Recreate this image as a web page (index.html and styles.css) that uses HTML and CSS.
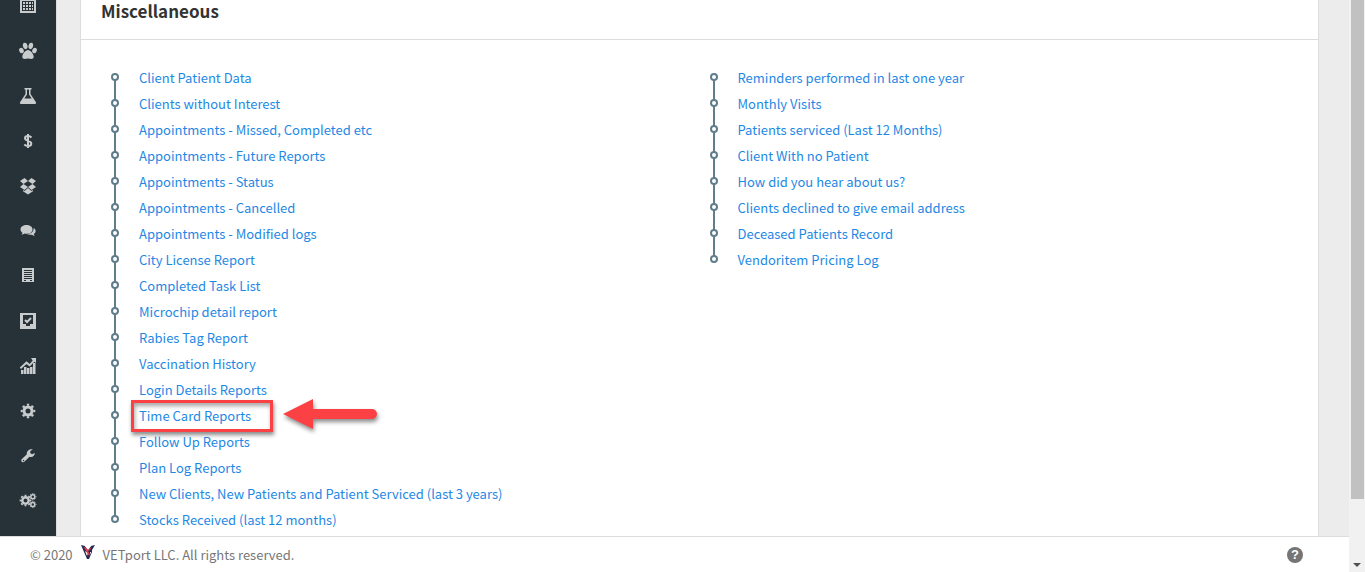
FILE: index.html
```
<!DOCTYPE html>
<html lang="en">
<head>
    <meta charset="utf-8">
    <title>VETport Reports</title>
    <link rel="stylesheet" href="styles.css">
</head>
<body>

    <div class="app">
        <div class="main">
            <nav class="sidebar">
                <a href="#" aria-label="Calendar"><svg viewBox="0 0 18 18"><path fill-rule="evenodd" d="M1 0h3v1h2V0h6v1h2V0h3v16H1zM3 4v10h12V4z"/><path d="M4 5h2v2H4zm3 0h2v2H7zm3 0h2v2h-2zm3 0h1v2h-1zM4 8h2v2H4zm3 0h2v2H7zm3 0h2v2h-2zm3 0h1v2h-1zM4 11h2v2H4zm3 0h2v2H7zm3 0h2v2h-2zm3 0h1v2h-1z"/></svg></a>
                <a href="#" aria-label="Patients"><svg viewBox="0 0 18 18"><ellipse cx="6.200" cy="4" rx="2.300" ry="3.200" transform="rotate(-10 6 4)"/><ellipse cx="11.800" cy="4" rx="2.300" ry="3.200" transform="rotate(10 12 4)"/><ellipse cx="2.700" cy="8.500" rx="2.200" ry="2.800" transform="rotate(-25 2.500 9)"/><ellipse cx="15.300" cy="8.500" rx="2.200" ry="2.800" transform="rotate(25 15.500 9)"/><path d="M9 8c2.500 0 5.700 4 5.700 6.700 0 2.800-2.700 2.300-5.700 1.800-3 .5-5.700 1-5.700-1.800C3.300 12 6.500 8 9 8z"/></svg></a>
                <a href="#" aria-label="Laboratory"><svg viewBox="0 0 18 18"><path fill-rule="evenodd" d="M5.500 1h7v1.500h-1V7l5.300 8c.8 1.300.2 2-1 2H2.200c-1.200 0-1.800-.7-1-2l5.300-8V2.500h-1zM8 2.500v5L5.300 11.500h7.400L10 7.500v-5z"/></svg></a>
                <a href="#" aria-label="Billing"><svg viewBox="0 0 18 18"><path class="line" d="M12.500 5.500C11.500 4.500 10.300 4 9 4 7.200 4 6 5 6 6.300c0 3.200 6.300 1.900 6.300 5.200 0 1.500-1.300 2.500-3.300 2.500-1.500 0-2.700-.5-3.700-1.500M9 2v14"/></svg></a>
                <a href="#" aria-label="Inventory"><svg viewBox="0 0 18 18"><path d="M5.500 1L9 4 4.500 7 1 4zM12.500 1L17 4l-3.500 3L9 4zM4.500 7L9 10l-3.500 3L1 10zM13.500 7l3.500 3-4.500 3L9 10zM9 11l3.500 3 1.500-1v1.200L9 17.500l-5-3.300V13l1.500 1z"/></svg></a>
                <a href="#" aria-label="Messages"><svg viewBox="0 0 18 18"><path d="M7.500 3c3.300 0 6 1.800 6 4.400s-2.700 4.400-6 4.400c-.7 0-1.300-.1-1.900-.2-1 .8-2 1.100-3.200 1.200.7-.7 1-1.300 1.100-2C2.300 9.900 1.500 8.700 1.500 7.400 1.500 4.800 4.200 3 7.500 3z"/><path d="M14.600 6c1.200.7 2 1.700 2 3 0 1.200-.7 2.300-1.900 3 .2.800.5 1.300 1.100 1.900-1.200-.1-2.200-.5-3-1.200-2 .3-3.800 0-5-.7 4.200 0 7.200-2.300 6.800-6z"/></svg></a>
                <a href="#" aria-label="Facilities"><svg viewBox="0 0 18 18"><path fill-rule="evenodd" d="M3 1h12v14H3zM5 3v1h8V3zm0 2v1h8V5zm0 2v1h8V7zm0 2v1h8V9zm0 2v1h8v-1zm0 2v1h2v-1zm6 0v1h2v-1z"/></svg></a>
                <a href="#" aria-label="Tasks"><svg viewBox="0 0 18 18"><path fill-rule="evenodd" d="M1 1h16v16H1zM4 3v9h3v2h4v-2h3V3z"/><path class="line" d="M6 8l2 2 4-4"/></svg></a>
                <a href="#" aria-label="Reports"><svg viewBox="0 0 18 18"><path d="M2 13h2.500v4H2zm3-3h2.500v7H5zm3 1h2.500v6H8zm3-1h2.500v7H11zm3-4h2.500v11H14zM12 1h5v5l-1.700-1.200-4.600 4.700L7.500 7 2 12 .8 10.500 7.500 4.300l3.200 2.700 3-3.600z"/></svg></a>
                <a href="#" aria-label="Settings"><svg viewBox="0 0 18 18"><circle class="gear" cx="9" cy="9" r="4"/><circle class="teeth" cx="9" cy="9" r="6.300" pathLength="16"/></svg></a>
                <a href="#" aria-label="Tools"><svg viewBox="0 0 18 18"><path fill-rule="evenodd" d="M13.800 2.500L11.300 4v2.200l1.900 1.100L15.700 6c.3 2.200-1.500 4-3.700 4-.6 0-1-.1-1.500-.3L5.600 14.600c-1.900 1.900-4.600-.7-2.700-2.600L7.900 7.200C7.200 4.500 10.500 1.300 13.800 2.500zM4 13a.7.7 0 1 0 1 1 .7.7 0 0 0-1-1z"/></svg></a>
                <a href="#" aria-label="Configuration"><svg viewBox="0 0 18 18"><g transform="translate(-.7 1.300) scale(.8)"><circle class="gear" cx="9" cy="9" r="4"/><circle class="teeth" cx="9" cy="9" r="6.300" pathLength="16"/></g><g transform="translate(9.300 .2) scale(.5)"><circle class="gear" cx="9" cy="9" r="4"/><circle class="teeth" cx="9" cy="9" r="6.300" pathLength="16"/></g><g transform="translate(9.300 8) scale(.5)"><circle class="gear" cx="9" cy="9" r="4"/><circle class="teeth" cx="9" cy="9" r="6.300" pathLength="16"/></g></svg></a>
            </nav>

            <div class="content">
                <div class="panel">
                    <h2>Miscellaneous</h2>
                    <div class="columns">
                        <ul class="report-list">
                            <li><a href="#">Client Patient Data</a></li>
                            <li><a href="#">Clients without Interest</a></li>
                            <li><a href="#">Appointments - Missed, Completed etc</a></li>
                            <li><a href="#">Appointments - Future Reports</a></li>
                            <li><a href="#">Appointments - Status</a></li>
                            <li><a href="#">Appointments - Cancelled</a></li>
                            <li><a href="#">Appointments - Modified logs</a></li>
                            <li><a href="#">City License Report</a></li>
                            <li><a href="#">Completed Task List</a></li>
                            <li><a href="#">Microchip detail report</a></li>
                            <li><a href="#">Rabies Tag Report</a></li>
                            <li><a href="#">Vaccination History</a></li>
                            <li><a href="#">Login Details Reports</a></li>
                            <li>
                                <a href="#">Time Card Reports</a>
                                <span class="highlight"></span>
                                <svg class="arrow" viewBox="0 0 95 32"><path d="M0 15L30 0v10h59a5 5 0 0 1 0 10H30v10z"/></svg>
                            </li>
                            <li><a href="#">Follow Up Reports</a></li>
                            <li><a href="#">Plan Log Reports</a></li>
                            <li><a href="#">New Clients, New Patients and Patient Serviced (last 3 years)</a></li>
                            <li><a href="#">Stocks Received (last 12 months)</a></li>
                        </ul>
                        <ul class="report-list">
                            <li><a href="#">Reminders performed in last one year</a></li>
                            <li><a href="#">Monthly Visits</a></li>
                            <li><a href="#">Patients serviced (Last 12 Months)</a></li>
                            <li><a href="#">Client With no Patient</a></li>
                            <li><a href="#">How did you hear about us?</a></li>
                            <li><a href="#">Clients declined to give email address</a></li>
                            <li><a href="#">Deceased Patients Record</a></li>
                            <li><a href="#">Vendoritem Pricing Log</a></li>
                        </ul>
                    </div>
                </div>
            </div>
        </div>

        <footer class="footer">
            <span>© 2020</span>
            <svg class="logo" viewBox="0 0 14 15"><path fill="#1f2a50" d="M0 0l4 1 3 4 3-4 4-1-3 5v2L8 14H6L3 7z"/><path fill="#fff" d="M4 1h6L7 5zM4 6l3 2-1 3zM9 7l1 0-1 3z"/><path fill="#e5394a" d="M2 1l3 2 2 2 4-3-2 3-2 1 2 3-1 2-3-5z"/></svg>
            <span>VETport LLC. All rights reserved.</span>
            <button class="help" aria-label="Help">?</button>
        </footer>
    </div>

    <div class="scrollbar">
        <div class="thumb"></div>
        <div class="down"></div>
    </div>

</body>
</html>
```
FILE: styles.css
```
*,
*::before,
*::after {
    box-sizing: border-box;
}

body {
    margin: 0;
    height: 100vh;
    display: flex;
    overflow: hidden;
    font-family: "Noto Sans CJK SC", sans-serif;
    font-size: 13px;
    color: #777;
    background: #ececec;
}

.app {
    flex: 1;
    display: flex;
    flex-direction: column;
}

.main {
    flex: 1;
    min-height: 0;
    display: flex;
}

/* sidebar */
.sidebar {
    width: 56px;
    display: flex;
    flex-direction: column;
    justify-content: flex-end;
    padding-bottom: 13px;
    overflow: hidden;
    background: #263238;
}

.sidebar a {
    flex: none;
    height: 45px;
    display: flex;
    align-items: center;
    justify-content: center;
}

.sidebar svg {
    width: 18px;
    height: 18px;
    fill: #c9cccd;
}

.sidebar .line {
    fill: none;
    stroke: #c9cccd;
    stroke-width: 2;
}

.sidebar .gear {
    fill: none;
    stroke: #c9cccd;
    stroke-width: 3;
}

.sidebar .teeth {
    fill: none;
    stroke: #c9cccd;
    stroke-width: 2;
    stroke-dasharray: 1;
    stroke-dashoffset: 0.5;
}

/* content */
.content {
    flex: 1;
    min-width: 0;
    padding: 0 30px 0 23px;
    border-left: 1px solid #ddd;
}

.panel {
    height: 100%;
    background: #fff;
    border: 1px solid #ddd;
    border-width: 0 1px;
}

.panel h2 {
    margin: 0;
    height: 40px;
    padding: 0 20px;
    border-bottom: 1px solid #ddd;
    font-size: 17px;
    font-weight: bold;
    line-height: 22px;
    color: #333;
}

.columns {
    display: grid;
    grid-template-columns: 1fr 1fr;
    padding: 25px 20px 0;
}

.report-list {
    margin: 0;
    padding: 0;
    list-style: none;
}

.report-list li {
    position: relative;
    height: 26px;
    padding-left: 38px;
    line-height: 26px;
    white-space: nowrap;
}

.report-list li::before {
    content: "";
    position: absolute;
    left: 10px;
    top: 8px;
    width: 8px;
    height: 8px;
    border: 2px solid #607d8b;
    border-radius: 50%;
}

.report-list li:not(:last-child)::after {
    content: "";
    position: absolute;
    left: 13px;
    top: 15px;
    width: 2px;
    height: 20px;
    background: #607d8b;
}

.report-list a {
    color: #1e88e5;
    text-decoration: none;
}

.highlight {
    position: absolute;
    left: 30px;
    top: -3px;
    width: 142px;
    height: 32px;
    border: 3px solid #fb4143;
    box-shadow: 1px 3px 4px rgba(0, 0, 0, 0.45), inset 1px 3px 4px rgba(0, 0, 0, 0.35);
}

.arrow {
    position: absolute;
    left: 182px;
    top: -4px;
    width: 95px;
    height: 32px;
    overflow: visible;
    fill: #fb4143;
    filter: drop-shadow(1px 3px 2px rgba(0, 0, 0, 0.45));
}

/* footer */
.footer {
    height: 36px;
    display: flex;
    align-items: center;
    padding: 0 46px 0 30px;
    border-top: 1px solid #ddd;
    background: #fff;
}

.logo {
    width: 14px;
    height: 15px;
    margin: 0 8px 4px;
}

.help {
    margin-left: auto;
    width: 16px;
    height: 16px;
    padding: 0;
    border: none;
    border-radius: 50%;
    background: #757575;
    color: #fff;
    font: bold 13px/16px "Liberation Sans", sans-serif;
}

/* scrollbar */
.scrollbar {
    width: 16px;
    display: flex;
    flex-direction: column;
    align-items: center;
    justify-content: space-between;
    padding-bottom: 5px;
    background: #f1f1f1;
}

.thumb {
    width: 13px;
    height: 88%;
    background: #c1c1c1;
}

.down {
    border: 4px solid transparent;
    border-top-color: #505050;
    border-bottom: none;
}
```
